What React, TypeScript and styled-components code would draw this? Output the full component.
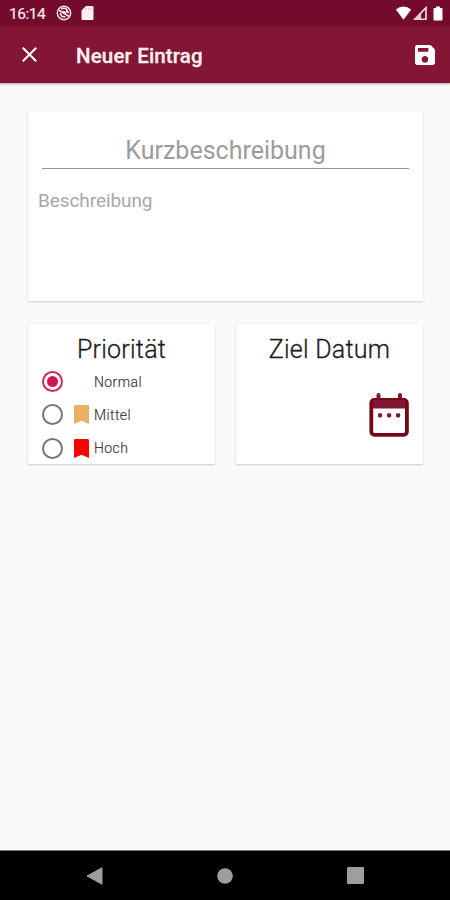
import React from "react";
import styled, { createGlobalStyle } from "styled-components";

const Global = createGlobalStyle`
  * { box-sizing: border-box; }
  body { margin: 0; background: #fafafa; font-family: Roboto, "Liberation Sans", sans-serif; }
`;

const Screen = styled.div`
  width: 450px;
  height: 900px;
  display: flex;
  flex-direction: column;
  background: #fafafa;
  overflow: hidden;
`;

const StatusBar = styled.div`
  height: 26px;
  flex: none;
  display: flex;
  align-items: center;
  padding: 0 7px 0 9px;
  background: #750b2c;
  color: #f8e6ea;
`;

const Clock = styled.span`
  width: 47px;
  padding-top: 2px;
  font-size: 15.5px;
  line-height: 24px;
  letter-spacing: -0.45px;
  white-space: nowrap;
  -webkit-text-stroke: 0.2px #f8e6ea;
`;

const Glyph = styled.svg<{ $gap?: number }>`
  display: block;
  flex: none;
  margin-left: ${(p) => p.$gap ?? 0}px;
`;

const Spacer = styled.div`
  flex: 1;
`;

const AppBar = styled.header`
  height: 57px;
  flex: none;
  display: flex;
  align-items: center;
  padding: 0 15px 0 22px;
  background: #821634;
  box-shadow: 0 1px 2px rgba(90, 20, 30, 0.4);
  z-index: 1;
`;

const Title = styled.h1`
  margin: 2px 0 0 39px;
  flex: 1;
  color: #fbeef1;
  font-size: 20.5px;
  font-weight: 500;
  line-height: 28px;
  letter-spacing: 0.15px;
  -webkit-text-stroke: 0.3px #fbeef1;
`;

const Content = styled.main`
  flex: 1;
  display: flex;
  flex-direction: column;
  gap: 23px;
  padding: 28px 27px 0 28px;
`;

const Card = styled.section<{ $height: number }>`
  display: flow-root;
  height: ${(p) => p.$height}px;
  min-width: 0;
  background: #fff;
  border-radius: 1px;
  box-shadow: 0 1px 2px rgba(0, 0, 0, 0.16), 0 0 3px rgba(0, 0, 0, 0.05);
`;

const CardRow = styled.div`
  display: grid;
  grid-template-columns: 187px 187px;
  gap: 21px;
`;

const ShortField = styled.div`
  margin: 23px 14px 0;
  height: 35px;
  padding-top: 1px;
  border-bottom: 1px solid #949494;
  color: #9c9c9c;
  font-size: 25px;
  line-height: 32px;
  text-align: center;
`;

const LongField = styled.div`
  margin: 20px 10px 0;
  color: #a8a8a8;
  font-size: 19px;
  line-height: 24px;
  letter-spacing: -0.08px;
`;

const CardTitle = styled.h2`
  margin: 10px 0 -1px;
  color: #1c1c1c;
  font-size: 25px;
  font-weight: 300;
  line-height: 32px;
  letter-spacing: 0.25px;
  text-align: center;
  -webkit-text-stroke: 0.3px #1c1c1c;
`;

const Options = styled.div`
  display: flex;
  flex-direction: column;
  padding-left: 14px;
`;

const Option = styled.label`
  height: 33.3px;
  display: grid;
  grid-template-columns: 32px 20px auto;
  align-items: center;
  color: #333;
  font-size: 14px;
  font-weight: 300;
  letter-spacing: 0.4px;
  -webkit-text-stroke: 0.15px #333;
`;

const Radio = styled.span<{ $checked?: boolean }>`
  width: 21px;
  height: 21px;
  display: grid;
  place-items: center;
  border: 2px solid ${(p) => (p.$checked ? "#d6245c" : "#777")};
  border-radius: 50%;

  &::after {
    content: "";
    width: 11px;
    height: 11px;
    border-radius: 50%;
    background: ${(p) => (p.$checked ? "#d0144f" : "transparent")};
  }
`;

const DateArea = styled.div`
  display: flex;
  justify-content: flex-end;
  padding: 28px 14px 0 0;
`;

const NavBar = styled.nav`
  height: 50px;
  flex: none;
  display: flex;
  align-items: center;
  justify-content: space-between;
  padding: 0 86px;
  background: #000;
  border-top: 1px solid #777;
`;

const priorities = [
  { label: "Normal", color: "", checked: true },
  { label: "Mittel", color: "#e8b060", checked: false },
  { label: "Hoch", color: "#ff0000", checked: false },
];

export default function App() {
  return (
    <Screen>
      <Global />
      <StatusBar>
        <Clock>16:14</Clock>
        <Glyph width="16" height="16" viewBox="0 0 16 16" fill="none" stroke="#f8e6ea">
          <circle cx="8" cy="8" r="6.7" strokeWidth="1.4" />
          <path d="M3 5.2 12.8 11.2M5 4.2q3-2 5.5 0l1.5 3-2.5-.8M4 8.2l2 3.2 3.5.6" strokeWidth="1.6" />
          <path d="M6.8 6.2 9.8 8.3" strokeWidth="2" />
        </Glyph>
        <Glyph $gap={9} width="13" height="14" viewBox="0 0 13 14">
          <path d="M5 0h6.2A1.3 1.3 0 0 1 12.5 1.3v11.4A1.3 1.3 0 0 1 11.2 14H1.8A1.3 1.3 0 0 1 .5 12.7V4.5z" fill="#fbeff2" />
          <path d="M5.1 1.8v2.2M7.4 1.8v2.2M9.7 1.8v2.2" stroke="#dcb9c5" />
        </Glyph>
        <Spacer />
        <Glyph width="17" height="14" viewBox="0 0 17 14">
          <path d="M0.8 3.6Q8.5-2.6 16.2 3.6L8.5 13.7z" fill="#fff" />
        </Glyph>
        <Glyph $gap={1} width="14" height="14" viewBox="0 0 14 14">
          <path d="M1.8 13.2 13 1.6v11.6z" fill="none" stroke="#eedde3" strokeWidth="1.6" />
          <path d="M8.2 6.3v7H2z" fill="#e5ccd5" />
        </Glyph>
        <Glyph $gap={6} width="10" height="15" viewBox="0 0 10 15">
          <path d="M3 .5h4V2h1.5q1 0 1 1v10.5q0 1-1 1h-7q-1 0-1-1V3q0-1 1-1H3z" fill="#fff" />
        </Glyph>
      </StatusBar>

      <AppBar>
        <Glyph width="15" height="15" viewBox="0 0 15 15">
          <path d="M.8.8 14.2 14.2M14.2.8.8 14.2" stroke="#fff" strokeWidth="2" />
        </Glyph>
        <Title>Neuer Eintrag</Title>
        <Glyph width="20" height="20" viewBox="3 3 18 18">
          <path
            d="M17 3H5c-1.11 0-2 .9-2 2v14c0 1.1.89 2 2 2h14c1.1 0 2-.9 2-2V7zm-5 16c-1.66 0-3-1.34-3-3s1.34-3 3-3 3 1.34 3 3-1.34 3-3 3m3-10H5.6V5.8H15z"
            fill="#fff"
          />
        </Glyph>
      </AppBar>

      <Content>
        <Card $height={190}>
          <ShortField>Kurzbeschreibung</ShortField>
          <LongField>Beschreibung</LongField>
        </Card>
        <CardRow>
          <Card $height={140}>
            <CardTitle>Priorität</CardTitle>
            <Options>
              {priorities.map((p) => (
                <Option key={p.label}>
                  <Radio $checked={p.checked} />
                  {p.color ? (
                    <Glyph width="15" height="19" viewBox="0 0 15 19">
                      <path d="M1.3 0h12.4Q15 0 15 1.3V19l-7.5-3.3L0 19V1.3Q0 0 1.3 0" fill={p.color} />
                    </Glyph>
                  ) : (
                    <span />
                  )}
                  <span>{p.label}</span>
                </Option>
              ))}
            </Options>
          </Card>
          <Card $height={140}>
            <CardTitle>Ziel Datum</CardTitle>
            <DateArea>
              <Glyph width="40" height="44" viewBox="0 0 40 44">
                <path d="M9.5 2v6M31 2v6" stroke="#821634" strokeWidth="4" strokeLinecap="round" />
                <rect x="2.3" y="7" width="35.6" height="34.8" rx="3" fill="none" stroke="#750816" strokeWidth="3.8" />
                <path d="M4 7h32v8.5H4z" fill="#821634" />
                <g fill="#821634">
                  <rect x="9" y="20.3" width="4.2" height="4.2" rx="1.4" />
                  <rect x="18" y="20.3" width="4.2" height="4.2" rx="1.4" />
                  <rect x="27" y="20.3" width="4.2" height="4.2" rx="1.4" />
                </g>
              </Glyph>
            </DateArea>
          </Card>
        </CardRow>
      </Content>

      <NavBar>
        <Glyph width="17" height="18" viewBox="0 0 17 18">
          <path d="M16 .8v16.4L1 9z" fill="#9e9e9e" stroke="#9e9e9e" strokeLinejoin="round" />
        </Glyph>
        <Glyph width="16" height="16" viewBox="0 0 16 16">
          <circle cx="8" cy="8" r="7.8" fill="#9e9e9e" />
        </Glyph>
        <Glyph width="17" height="17" viewBox="0 0 17 17">
          <rect width="17" height="17" rx="1.2" fill="#9e9e9e" />
        </Glyph>
      </NavBar>
    </Screen>
  );
}
